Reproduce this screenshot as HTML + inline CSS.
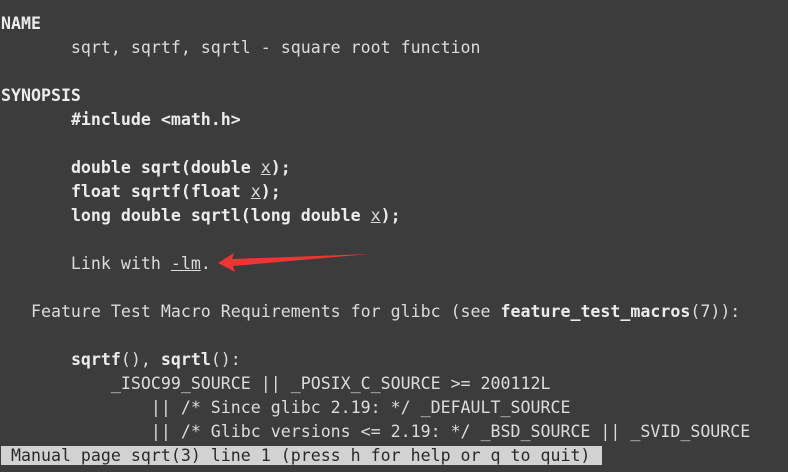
<!DOCTYPE html>
<html><head><style>
html,body{margin:0;padding:0;background:#3c3c3c;width:788px;height:472px;overflow:hidden}
pre{margin:0;position:absolute;left:1px;top:12px;font-family:"DejaVu Sans Mono","Liberation Mono",monospace;font-size:16.6px;line-height:24px;color:#dcdcdc}
b{color:#ececec}
u{text-decoration:underline}
.st{background:#d2d2d2;color:#2a2a2a;padding-right:12px}
</style></head><body>
<pre><b>NAME</b>
       sqrt, sqrtf, sqrtl - square root function

<b>SYNOPSIS</b>
       <b>#include &lt;math.h&gt;</b>

       <b>double sqrt(double </b><u>x</u><b>);</b>
       <b>float sqrtf(float </b><u>x</u><b>);</b>
       <b>long double sqrtl(long double </b><u>x</u><b>);</b>

       Link with <u>-lm</u>.

   Feature Test Macro Requirements for glibc (see <b>feature_test_macros</b>(7)):

       <b>sqrtf</b>(), <b>sqrtl</b>():
           _ISOC99_SOURCE || _POSIX_C_SOURCE &gt;= 200112L
               || /* Since glibc 2.19: */ _DEFAULT_SOURCE
               || /* Glibc versions &lt;= 2.19: */ _BSD_SOURCE || _SVID_SOURCE
<span class="st"> Manual page sqrt(3) line 1 (press h for help or q to quit)</span></pre>
<svg width="788" height="472" style="position:absolute;left:0;top:0">
<polygon points="218,263 234,253 232,259 370,254 233,266 235,272" fill="#f03434"/>
</svg>
</body></html>
